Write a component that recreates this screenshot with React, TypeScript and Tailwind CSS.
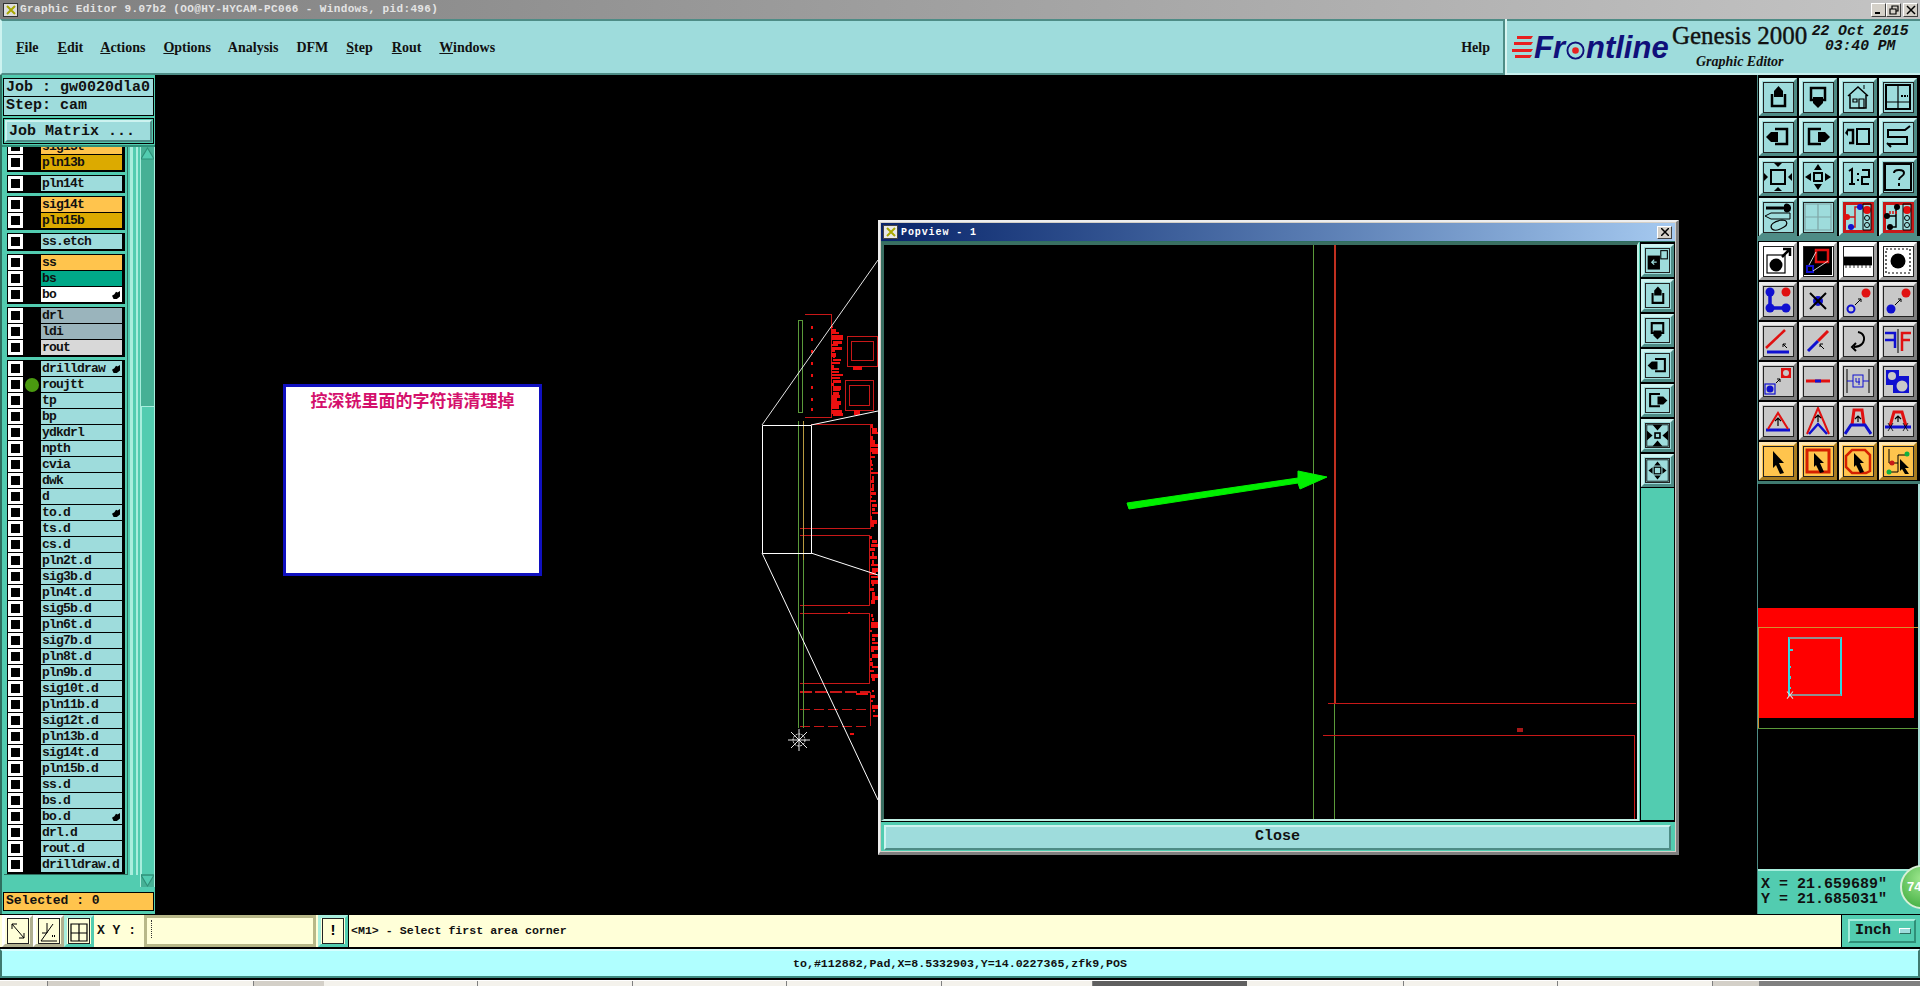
import React from "react";

const MONO = "font-['Liberation_Mono',monospace]";
const SERIF = "font-['Liberation_Serif',serif]";

type Tone = "teal" | "gray" | "white" | "amber" | "redline";

const toneClass: Record<Tone, string> = {
  teal: "bg-[#9edcdc] border-t-[#cdf3f0] border-l-[#cdf3f0] border-r-[#4e8c86] border-b-[#4e8c86]",
  gray: "bg-[#c8c8c8] border-t-[#ececec] border-l-[#ececec] border-r-[#7c7c7c] border-b-[#7c7c7c]",
  white: "bg-white border-t-white border-l-white border-r-[#a0a0a0] border-b-[#a0a0a0]",
  amber: "bg-[#ffc44d] border-t-[#ffe6b0] border-l-[#ffe6b0] border-r-[#a87c20] border-b-[#a87c20]",
  redline: "bg-[#9edcdc] border-t-[#cdf3f0] border-l-[#cdf3f0] border-r-[#4e8c86] border-b-[#4e8c86]",
};

const ToolBtn: React.FC<{ tone?: Tone; children: React.ReactNode }> = ({ tone = "teal", children }) => (
  <div className={`w-[38px] h-[38px] border-[3px] flex items-center justify-center ${toneClass[tone]}`}>
    <div
      className={`w-[31px] h-[31px] flex items-center justify-center ${
        tone === "redline" ? "border-[3px] border-[#c81818]" : "border border-[#222]"
      }`}
    >
      <svg viewBox="0 0 28 28" className="w-[28px] h-[28px] shrink-0">
        {children}
      </svg>
    </div>
  </div>
);

const PopBtn: React.FC<{ children: React.ReactNode }> = ({ children }) => (
  <div className="w-[33px] h-[33px] border-[3px] bg-[#9edcdc] border-t-[#cdf3f0] border-l-[#cdf3f0] border-r-[#4e8c86] border-b-[#4e8c86] flex items-center justify-center">
    <div className="w-[25px] h-[25px] border border-[#222] flex items-center justify-center">
      <svg viewBox="0 0 28 28" className="w-[23px] h-[23px] shrink-0">
        {children}
      </svg>
    </div>
  </div>
);

const S = { fill: "none", stroke: "#000", strokeWidth: 2 };
const BLUE = "#1010d0";
const RED = "#e01010";

const iconUp = (
  <>
    <path d="M8 11V23H21V11" {...S} strokeWidth={2.5} />
    <path d="M14.5 3L19 8V14H10V8Z" fill="#000" />
  </>
);
const iconDown = (
  <>
    <path d="M7 5H21V17H7Z" {...S} strokeWidth={2.5} />
    <path d="M14 25L9 20V14H19V20Z" fill="#000" />
  </>
);
const iconLeft = (
  <>
    <path d="M11 6H23V21H11" {...S} strokeWidth={2.5} />
    <path d="M2 14L7 9H14V19H7Z" fill="#000" />
  </>
);
const iconRight = (
  <>
    <path d="M17 6H5V21H17" {...S} strokeWidth={2.5} />
    <path d="M26 14L21 9H14V19H21Z" fill="#000" />
  </>
);
const iconFit = (
  <>
    <rect x="7" y="7" width="14" height="14" {...S} />
    <path d="M10 0H18L14 4ZM10 28H18L14 24ZM0 10V18L4 14ZM28 10V18L24 14Z" fill="#000" />
  </>
);
const iconPan = (
  <>
    <rect x="10" y="10" width="8" height="8" {...S} />
    <path d="M14 1L18 7H10ZM14 27L18 21H10ZM1 14L7 10V18ZM27 14L21 10V18Z" fill="#000" />
  </>
);

const group1 = [
  iconUp,
  iconDown,
  <>
    <path d="M4 13L14 4L24 13M6 12V25H22V12" {...S} strokeWidth={1.5} />
    <path d="M9 16H13V19H9ZM15 16H20V25H15Z" {...S} strokeWidth={1.2} />
    <path d="M20 6V2" {...S} strokeWidth={1} />
  </>,
  <>
    <rect x="2" y="2" width="24" height="24" {...S} />
    <path d="M14 2V26M2 19H26" {...S} strokeWidth={1.2} />
    <path d="M17 13H24" stroke="#000" strokeWidth={2} strokeDasharray="2 1" />
  </>,
  iconLeft,
  iconRight,
  <>
    <rect x="13" y="6" width="12" height="15" {...S} />
    <path d="M4 7H9V20H5" {...S} strokeWidth={2.5} />
    <path d="M1 10L4 5V13Z" fill="#000" />
  </>,
  <path d="M26 3L21 7H4V14H23V21H4M3 20L7 24" {...S} />,
  iconFit,
  iconPan,
  <>
    <path d="M5 8L8 6V21M8 21H5M8 21H11M13 11H15M13 17H15" {...S} />
    <path d="M18 7H25V14H18V21H25" {...S} />
  </>,
  <>
    <rect x="1" y="1" width="26" height="26" {...S} />
    <path d="M10 10C10 6 20 6 20 10C20 14 15 13 15 17" {...S} />
    <rect x="14" y="20" width="2" height="3" fill="#000" />
  </>,
  <>
    <path d="M2 5H22" stroke="#000" strokeWidth={3} />
    <path d="M20 2A4 4 0 0 1 27 5A4 4 0 0 1 20 8Z" fill="#000" />
    <path d="M1 13L7 10H26V16H7Z" {...S} strokeWidth={1} />
    <path d="M8 26C5 22 10 18 18 17C24 17 24 22 20 24C15 27 10 28 8 26Z" {...S} strokeWidth={1.2} />
  </>,
  <path d="M1 1H27V27H1ZM14 1V27M1 14H27" fill="none" stroke="#7fa5a5" strokeWidth={1.2} />,
  <>
    <path d="M3 14H11V4H16M11 14V24H7" fill="none" stroke="#c81818" strokeWidth={1.5} />
    <circle cx="3" cy="14" r="3" fill={RED} />
    <circle cx="16" cy="4" r="3" fill={BLUE} />
    <circle cx="7" cy="24" r="3" fill={BLUE} />
    <circle cx="23" cy="7" r="4" fill={RED} />
    <circle cx="23" cy="15" r="2.5" {...S} strokeWidth={1} />
    <circle cx="23" cy="22" r="2.5" {...S} strokeWidth={1} />
    <path d="M19 1H27V27H19Z" {...S} strokeWidth={1} />
  </>,
  <>
    <path d="M3 13H12V4M12 13V24H6" fill="none" stroke="#000" strokeWidth={1.5} />
    <path d="M6 11V8M9 11V8M12 11V8" stroke={RED} strokeWidth={1.5} />
    <circle cx="3" cy="13" r="3" fill="#000" />
    <circle cx="13" cy="4" r="3" fill="#000" />
    <circle cx="6" cy="24" r="3" fill="#000" />
    <circle cx="23" cy="7" r="4" fill={RED} />
    <circle cx="23" cy="15" r="2.5" {...S} strokeWidth={1} />
    <circle cx="23" cy="22" r="2.5" {...S} strokeWidth={1} />
    <path d="M19 1H27V27H19Z" {...S} strokeWidth={1} />
  </>,
];

const group2: { tone: Tone; icon: React.ReactNode }[] = [
  {
    tone: "white",
    icon: (
      <>
        <rect x="3" y="8" width="18" height="18" {...S} strokeWidth={1.2} />
        <circle cx="12" cy="18" r="6.5" fill="#000" />
        <path d="M18 10L25 3M19 2H26V9" {...S} strokeWidth={2.5} />
      </>
    ),
  },
  {
    tone: "white",
    icon: (
      <>
        <rect x="0" y="0" width="28" height="28" fill="#000" />
        <rect x="12" y="3" width="12" height="12" fill="none" stroke={RED} strokeWidth={2.5} />
        <rect x="3" y="19" width="6" height="6" fill="none" stroke={BLUE} strokeWidth={2} />
        <path d="M5 18L12 5M9 24L24 14" stroke="#fff" strokeWidth={0.8} />
      </>
    ),
  },
  {
    tone: "white",
    icon: <path d="M0 10H28V18H0ZM2 18V21M6 18V21M10 18V21M14 18V21M18 18V21M22 18V21M26 18V21" fill="#000" stroke="#000" strokeWidth={0.8} />,
  },
  {
    tone: "white",
    icon: (
      <>
        <rect x="2" y="2" width="24" height="24" fill="none" stroke="#000" strokeWidth={1.2} strokeDasharray="2 2" />
        <circle cx="14" cy="14" r="7.5" fill="#000" />
      </>
    ),
  },
  {
    tone: "gray",
    icon: (
      <>
        <path d="M6 5V21H22" fill="none" stroke={BLUE} strokeWidth={3.5} />
        <circle cx="6" cy="5" r="4.5" fill={BLUE} />
        <circle cx="6" cy="21" r="4.5" fill={BLUE} />
        <circle cx="22" cy="21" r="4.5" fill={BLUE} />
        <circle cx="22" cy="5" r="4.5" fill={RED} />
      </>
    ),
  },
  {
    tone: "gray",
    icon: (
      <>
        <circle cx="14" cy="14" r="5" fill={BLUE} />
        <path d="M6 6L22 22M22 6L6 22" stroke="#000" strokeWidth={2} />
      </>
    ),
  },
  {
    tone: "gray",
    icon: (
      <>
        <circle cx="7" cy="22" r="3.5" fill="none" stroke={BLUE} strokeWidth={2} />
        <circle cx="22" cy="6" r="4.5" fill={RED} />
        <path d="M11 18L17 12M14 12H17V15" {...S} strokeWidth={1} />
      </>
    ),
  },
  {
    tone: "gray",
    icon: (
      <>
        <circle cx="7" cy="22" r="4.5" fill={BLUE} />
        <circle cx="22" cy="6" r="4.5" fill={RED} />
        <path d="M11 18L17 12M14 12H17V15" {...S} strokeWidth={1} />
      </>
    ),
  },
  {
    tone: "gray",
    icon: (
      <>
        <path d="M2 21L21 3" stroke={RED} strokeWidth={2.5} />
        <path d="M3 25H25" stroke={BLUE} strokeWidth={3} />
        <path d="M19 17L23 21M19 17V20M19 17H22" {...S} strokeWidth={1} />
      </>
    ),
  },
  {
    tone: "gray",
    icon: (
      <>
        <path d="M14 14L24 4" stroke={RED} strokeWidth={3} />
        <path d="M4 24L14 14" stroke={BLUE} strokeWidth={3} />
        <path d="M20 22L16 18M19 17H16V20" {...S} strokeWidth={1} />
      </>
    ),
  },
  {
    tone: "gray",
    icon: <path d="M14 5C20 6 22 12 18 17C16 19 13 20 10 20M12 16L8 20L12 24" {...S} />,
  },
  {
    tone: "gray",
    icon: (
      <>
        <path d="M1 6H11V21M1 13H10" fill="none" stroke={BLUE} strokeWidth={2.5} />
        <path d="M14 2V26" stroke="#000" strokeWidth={1} />
        <path d="M18 24V6H27M18 13H26" fill="none" stroke={RED} strokeWidth={2.5} />
      </>
    ),
  },
  {
    tone: "gray",
    icon: (
      <>
        <rect x="1" y="17" width="10" height="10" fill="none" stroke={BLUE} strokeWidth={1.2} />
        <circle cx="6" cy="22" r="3.5" fill={BLUE} />
        <rect x="17" y="1" width="10" height="10" fill={RED} />
        <circle cx="22" cy="6" r="3" fill="#c8c8c8" />
        <path d="M12 16L16 12M13 12H16V15" {...S} strokeWidth={1} />
      </>
    ),
  },
  {
    tone: "gray",
    icon: (
      <>
        <path d="M2 14H26" stroke={RED} strokeWidth={3} />
        <path d="M11 14H17" stroke={BLUE} strokeWidth={3} />
      </>
    ),
  },
  {
    tone: "gray",
    icon: (
      <>
        <path d="M3 2V26M25 2V26" stroke="#000" strokeWidth={1} />
        <rect x="9" y="8" width="10" height="12" fill="none" stroke={BLUE} strokeWidth={1} />
        <path d="M12 11V15H16M15 11V18M3 14H9M19 14H25" fill="none" stroke={BLUE} strokeWidth={1} />
      </>
    ),
  },
  {
    tone: "gray",
    icon: (
      <>
        <path d="M2 3H15V9H25V26H9V18H2Z" fill={BLUE} />
        <circle cx="8" cy="9" r="4" fill="#c8c8c8" />
        <circle cx="18" cy="19" r="5.5" fill="#c8c8c8" />
      </>
    ),
  },
  {
    tone: "gray",
    icon: (
      <>
        <path d="M2 23H26" stroke={BLUE} strokeWidth={3} />
        <path d="M14 11V19M11 14L14 11L17 14" {...S} strokeWidth={1.2} />
        <path d="M4 22L14 6L24 22" fill="none" stroke={RED} strokeWidth={2} />
      </>
    ),
  },
  {
    tone: "gray",
    icon: (
      <>
        <path d="M3 27L14 1L25 27" fill="none" stroke={RED} strokeWidth={2} />
        <path d="M5 27L14 17L23 27" fill="none" stroke={BLUE} strokeWidth={2.5} />
        <path d="M14 8V15M11 11L14 8L17 11" {...S} strokeWidth={1.2} />
      </>
    ),
  },
  {
    tone: "gray",
    icon: (
      <>
        <path d="M8 18L10 3H18L20 18" fill="none" stroke={RED} strokeWidth={3} />
        <path d="M1 27L7 18H21L27 27" fill="none" stroke={BLUE} strokeWidth={3} />
        <path d="M14 9V15M11 12L14 9L17 12" {...S} strokeWidth={1.2} />
      </>
    ),
  },
  {
    tone: "gray",
    icon: (
      <>
        <path d="M6 19L10 5H18L22 19" fill="none" stroke={RED} strokeWidth={3} />
        <path d="M1 20H27" stroke={BLUE} strokeWidth={3} />
        <path d="M4 16L9 24M9 16L4 24M19 16L24 24M24 16L19 24" stroke="#000" strokeWidth={0.8} />
        <path d="M14 9V15M11 12L14 9L17 12" {...S} strokeWidth={1.2} />
      </>
    ),
  },
  {
    tone: "amber",
    icon: <path d="M9 4L20 16L15 16L20 26L16 27L12 18L9 21Z" fill="#000" />,
  },
  {
    tone: "amber",
    icon: (
      <>
        <rect x="3" y="3" width="22" height="22" fill="none" stroke="#d42000" strokeWidth={3} />
        <path d="M10 6L20 16L16 16L20 25L16 26L12 18L10 20Z" fill="#000" />
      </>
    ),
  },
  {
    tone: "amber",
    icon: (
      <>
        <path d="M8 3H21L26 8V24L22 26H8L2 20V9Z" fill="none" stroke="#d42000" strokeWidth={2.5} />
        <path d="M10 6L20 16L16 16L20 25L16 26L12 18L10 20Z" fill="#000" />
      </>
    ),
  },
  {
    tone: "amber",
    icon: (
      <>
        <path d="M5 2V16H9M9 16H14V8H23M5 25H14V16" fill="none" stroke="#000" strokeWidth={1} />
        <circle cx="8" cy="16" r="2.5" fill="#c81818" />
        <circle cx="23" cy="7" r="2.5" fill="#10b040" />
        <circle cx="5" cy="25" r="2.5" fill="#10b040" />
        <path d="M16 12L25 21L21 21L25 27L21 27L18 22L16 24Z" fill="#000" />
      </>
    ),
  },
];

const popIcons = [
  <>
    <rect x="2" y="8" width="15" height="17" fill="#000" />
    <path d="M13 16H7M10 13L7 16L10 19" stroke="#9edcdc" strokeWidth={1.5} fill="none" />
    <rect x="18" y="2" width="8" height="10" {...S} strokeWidth={1.3} />
  </>,
  iconUp,
  iconDown,
  iconLeft,
  iconRight,
  <>
    <rect x="1" y="1" width="26" height="26" {...S} strokeWidth={1} />
    <rect x="11" y="11" width="6" height="6" {...S} />
    <path d="M8 1H20L14 8ZM8 27H20L14 20ZM1 8V20L8 14ZM27 8V20L20 14Z" fill="#000" />
  </>,
  <>
    <rect x="1" y="1" width="26" height="26" {...S} strokeWidth={1} />
    <rect x="10" y="10" width="8" height="8" {...S} strokeWidth={1.5} />
    <path d="M14 3L18 8H10ZM14 25L18 20H10ZM3 14L8 10V18ZM25 14L20 10V18Z" fill="#000" />
  </>,
];

type Layer = { name: string; color?: string; hand?: boolean; dot?: boolean };

const layerGroups: Layer[][] = [
  [
    { name: "sig13t", color: "bg-[#ffc44d]" },
    { name: "pln13b", color: "bg-[#dcaa00]" },
  ],
  [{ name: "pln14t" }],
  [
    { name: "sig14t", color: "bg-[#ffc44d]" },
    { name: "pln15b", color: "bg-[#dcaa00]" },
  ],
  [{ name: "ss.etch" }],
  [
    { name: "ss", color: "bg-[#ffc44d]" },
    { name: "bs", color: "bg-[#00a888]" },
    { name: "bo", color: "bg-white", hand: true },
  ],
  [
    { name: "drl", color: "bg-[#9ab4bc]" },
    { name: "ldi", color: "bg-[#9ab4bc]" },
    { name: "rout", color: "bg-[#d8d8d8]" },
  ],
  [
    { name: "drilldraw", hand: true },
    { name: "roujtt", dot: true },
    { name: "tp" },
    { name: "bp" },
    { name: "ydkdrl" },
    { name: "npth" },
    { name: "cvia" },
    { name: "dwk" },
    { name: "d" },
    { name: "to.d", hand: true },
    { name: "ts.d" },
    { name: "cs.d" },
    { name: "pln2t.d" },
    { name: "sig3b.d" },
    { name: "pln4t.d" },
    { name: "sig5b.d" },
    { name: "pln6t.d" },
    { name: "sig7b.d" },
    { name: "pln8t.d" },
    { name: "pln9b.d" },
    { name: "sig10t.d" },
    { name: "pln11b.d" },
    { name: "sig12t.d" },
    { name: "pln13b.d" },
    { name: "sig14t.d" },
    { name: "pln15b.d" },
    { name: "ss.d" },
    { name: "bs.d" },
    { name: "bo.d", hand: true },
    { name: "drl.d" },
    { name: "rout.d" },
    { name: "drilldraw.d" },
  ],
];

const LayerRow: React.FC<{ layer: Layer }> = ({ layer }) => (
  <div className="h-[16px] flex items-start relative">
    <div className="w-[15px] h-[15px] ml-[1px] border-[3px] border-white bg-black" />
    {layer.dot && <div className="absolute left-[18px] top-[1px] w-[14px] h-[14px] rounded-full bg-[#4a9a10]" />}
    <div
      className={`ml-[18px] w-[81px] h-[15px] flex items-center justify-between pl-[1px] pr-[2px] text-[13px] tracking-[-0.8px] font-bold text-[#111] leading-none ${MONO} ${
        layer.color ?? "bg-[#9edcdc]"
      }`}
    >
      <span>{layer.name}</span>
      {layer.hand && (
        <svg viewBox="0 0 10 10" className="w-[8px] h-[8px]">
          <path d="M0 6L3 4L5 1L7 2L10 0V7L6 10H2Z" fill="#000" />
        </svg>
      )}
    </div>
  </div>
);

const LeftPanel = () => (
  <div className="w-[155px] shrink-0 bg-[#52ccb0] flex flex-col border-l-[2px] border-[#2f6f60]">
    <div className="h-[72px] shrink-0 flex flex-col px-[1px] pt-[3px] border-b-2 border-[#2f8f78]">
      <div className={`h-[19px] bg-[#9edcdc] border border-black pl-[2px] font-bold text-[15px] leading-[17px] whitespace-nowrap text-[#111] ${MONO}`}>
        Job : gw0020dla0
      </div>
      <div className={`h-[19px] bg-[#9edcdc] border border-black border-t-0 pl-[2px] font-bold text-[15px] leading-[17px] text-[#111] ${MONO}`}>
        Step: cam
      </div>
      <div className="mt-[2px] h-[26px] border border-black bg-[#52ccb0] p-[1px]">
        <div className={`h-[22px] bg-[#9edcdc] border-2 border-t-[#cdf3f0] border-l-[#cdf3f0] border-r-[#4e8c86] border-b-[#4e8c86] pl-[2px] pt-[1px] font-bold text-[15px] leading-[17px] text-[#111] ${MONO}`}>
          Job Matrix ...
        </div>
      </div>
    </div>
    <div className="flex-1 flex min-h-0">
      <div className="w-[124px] h-[728px] overflow-hidden border-r border-b border-[#2f6f60] ml-[2px] pl-[3px]">
        <div className="-mt-[9px] flex flex-col gap-[3px]">
          {layerGroups.map((group) => (
            <div key={group[0].name} className="w-[118px] bg-black py-[1px]">
              {group.map((layer) => (
                <LayerRow key={layer.name} layer={layer} />
              ))}
            </div>
          ))}
        </div>
      </div>
      <div className="w-[8px] h-[728px] border-l-[3px] border-r-2 border-[#a8eedd] ml-[2px]" />
      <div className="w-[15px] h-[740px] ml-[2px] bg-[#46b095] border-x border-[#a8eedd] flex flex-col">
        <svg viewBox="0 0 12 12" className="w-[13px] h-[13px]">
          <path d="M6 1L12 11H0Z" fill="#52ccb0" stroke="#2f8f78" />
        </svg>
        <div className="mt-[246px] flex-1 bg-[#52ccb0] border-t border-l border-[#a8eedd]" />
        <svg viewBox="0 0 12 12" className="w-[13px] h-[13px]">
          <path d="M6 11L12 1H0Z" fill="#52ccb0" stroke="#2f8f78" />
        </svg>
      </div>
    </div>
    <div className={`mx-[1px] mb-[3px] h-[19px] bg-[#ffc44d] border border-black pl-[2px] text-[13px] leading-[16px] font-bold text-[#111] ${MONO}`}>
      Selected : 0
    </div>
  </div>
);

// scattered pads of the board, fixed seed so the picture does not change
const seeded = (seed: number) => () => {
  seed = (seed * 16807) % 2147483647;
  return seed / 2147483647;
};

const makeBlobs = (x0: number, x1: number, y0: number, y1: number, step: number, seed: number) => {
  const rnd = seeded(seed);
  const out: { x: number; y: number; w: number; h: number }[] = [];
  for (let y = y0; y < y1; y += step) {
    const w = 2 + Math.floor(rnd() * (x1 - x0 - 1));
    out.push({ x: x0 + Math.floor(rnd() * 3), y, w, h: 2 + Math.floor(rnd() * 3) });
  }
  return out;
};

const blobs = [
  ...makeBlobs(831, 842, 326, 414, 3, 77),
  ...makeBlobs(870, 878, 424, 526, 4, 991),
  ...makeBlobs(870, 878, 536, 604, 4, 313),
  ...makeBlobs(870, 878, 614, 682, 4, 5501),
  ...makeBlobs(871, 878, 690, 718, 5, 171),
];

const dashed = [692, 709, 726];

// canvas is offset by x=155, y=75
const PcbDrawing = () => (
  <svg className="absolute left-0 top-0 w-[1602px] h-[838px]" viewBox="155 75 1602 838" shapeRendering="crispEdges">
    <g fill="none" stroke="#c81818">
      <path d="M805 314H831V417H805" />
      <path d="M847 336H877V366H847ZM851 341H873V360H851Z" />
      <path d="M845 380H873V410H845ZM849 385H869V405H849Z" />
      <path d="M811 424H870V528H800" />
      <path d="M800 535H869V605H800" />
      <path d="M800 613H869V683H800" />
      <path d="M870 692V726" />
      {dashed.map((y, i) => (
        <path key={y} d={`M800 ${y}H870`} strokeWidth={i === 0 ? 2 : 1} strokeDasharray={i === 0 ? "12 3" : "10 4"} />
      ))}
    </g>
    <g fill="#ee1010">
      {[326, 338, 350, 362, 374, 386, 398, 408].map((y) => (
        <rect key={y} x={811} y={y} width={2} height={3} />
      ))}
      {blobs.map((b, i) => (
        <rect key={i} x={b.x} y={b.y} width={b.w} height={b.h} />
      ))}
      <rect x={853} y={366} width={9} height={4} />
      <rect x={854} y={410} width={6} height={5} />
      <rect x={856} y={693} width={12} height={2} />
      <rect x={850} y={733} width={4} height={2} />
      <rect x={848} y={612} width={2} height={2} />
    </g>
    <path d="M798.5 320.5H802.5V412.5H798.5Z" fill="none" stroke="#5a9a3a" />
    <path d="M798.5 421V728" stroke="#5a9a3a" fill="none" />
    <path d="M803.5 421V560" stroke="#b89a40" fill="none" />
    <path d="M803.5 560V728" stroke="#5a9a3a" fill="none" />
    <g fill="none" stroke="#fff" shapeRendering="auto">
      <path d="M762.5 425.5H811.5V553.5H762.5Z" />
      <path d="M762 425L878 260" strokeWidth={0.9} />
      <path d="M811 425L878 411" />
      <path d="M811 553L878 575" />
      <path d="M762 553L878 800" />
      <path d="M799 729V751M788 740H810M791 732L807 748M807 732L791 748" strokeWidth={0.9} />
      <circle cx="799" cy="740" r="6" strokeDasharray="2 1" strokeWidth={0.9} />
    </g>
  </svg>
);

const Popview = () => (
  <div className="absolute left-[723px] top-[145px] w-[801px] h-[635px] bg-[#d4d0c8] border-t-2 border-l-2 border-[#eee] border-r-[3px] border-b-[3px] border-r-[#808080] border-b-[#808080] flex flex-col p-[1px]">
    <div className="h-[18px] shrink-0 bg-gradient-to-r from-[#0a246a] to-[#a6caf0] flex items-center pl-[2px] pr-[3px]">
      <div className="w-[15px] h-[14px] bg-[#e8e8e8] border border-[#444] flex items-center justify-center">
        <svg viewBox="0 0 10 10" className="w-[10px] h-[10px]">
          <path d="M1 1L9 9M9 1L1 9" stroke="#a8a800" strokeWidth={2} />
        </svg>
      </div>
      <span className={`ml-[3px] text-[10px] tracking-[0.9px] font-bold text-white ${MONO}`}>Popview - 1</span>
      <div className="ml-auto w-[15px] h-[13px] bg-[#d4d0c8] border border-t-white border-l-white border-r-[#404040] border-b-[#404040] flex items-center justify-center">
        <svg viewBox="0 0 8 8" className="w-[8px] h-[8px]">
          <path d="M0 0L8 8M8 0L0 8" stroke="#000" strokeWidth={1.5} />
        </svg>
      </div>
    </div>
    <div className="flex-1 min-h-0 bg-[#52ccb0] flex flex-col border-t border-[#2f6f60]">
      <div className="flex-1 min-h-0 flex">
        <div className="w-[758px] bg-black border-l-[3px] border-t-[3px] border-[#3a6f62] border-r-2 border-r-[#c0f0e4] border-b-2 border-b-[#c0f0e4] relative">
          <svg className="absolute inset-0 w-full h-full" shapeRendering="crispEdges">
            <path d="M429.5 0V574" stroke="#5a9a3a" fill="none" />
            <path d="M450.5 0V459" stroke="#c03020" strokeWidth={2} fill="none" />
            <path d="M450.5 459V574" stroke="#5a9a3a" fill="none" />
            <path d="M444 458.5H752" stroke="#c81818" fill="none" />
            <path d="M439 490.5H750.5V574" stroke="#c81818" fill="none" />
            <rect x={633} y={483} width={6} height={4} fill="#a81818" />
            <path
              d="M243 258L414 233L414 226L443 232L416 244L414 238L245 264Z"
              fill="#00f000"
              stroke="#00f000"
              strokeLinejoin="round"
              shapeRendering="auto"
            />
          </svg>
        </div>
        <div className="flex-1 border border-black ml-[1px] flex flex-col items-center bg-[#52ccb0]">
          <div className="w-full bg-black flex flex-col items-center gap-[2px] py-[1px]">
            {popIcons.map((icon, i) => (
              <PopBtn key={i}>{icon}</PopBtn>
            ))}
          </div>
        </div>
      </div>
      <div className="h-[30px] shrink-0 border-t-[1px] border-black pt-[3px] pl-[3px] pr-[4px] pb-[1px]">
        <div className={`h-full bg-[#9edcdc] border-2 border-t-[#cdf3f0] border-l-[#cdf3f0] border-r-[#4e8c86] border-b-[#4e8c86] flex items-center justify-center text-[15px] font-bold text-[#111] ${MONO}`}>
          Close
        </div>
      </div>
    </div>
  </div>
);

const RightPanel = () => (
  <div className="w-[163px] shrink-0 bg-black flex flex-col border-l border-[#4e8c86]">
    <div className="pt-[3px] pl-[1px] flex flex-col">
      <div className="grid grid-cols-4 gap-[2px] w-[158px]">
        {group1.map((icon, i) => (
          <ToolBtn key={i} tone={i > 13 ? "redline" : "teal"}>
            {icon}
          </ToolBtn>
        ))}
      </div>
      <div className="h-[5px] mb-[1px] -ml-[1px] w-[162px] bg-[#4e8c86]" />
      <div className="grid grid-cols-4 gap-[2px] w-[158px]">
        {group2.map((b, i) => (
          <ToolBtn key={i} tone={b.tone}>
            {b.icon}
          </ToolBtn>
        ))}
      </div>
    </div>
    <div className="h-[3px] mt-[1px] bg-[#3f7a70]" />
    <div className="flex-1 relative border-r-2 border-[#a8dcd4]">
      <svg className="absolute inset-0 w-full h-full" viewBox="1758 484 160 384" preserveAspectRatio="none" shapeRendering="crispEdges">
        <rect x={1758} y={608} width={156} height={109} fill="#ff0000" />
        <path d="M1758 627.5H1918" stroke="#d09030" fill="none" />
        <path d="M1758 727.5H1918" stroke="#5a9a3a" fill="none" />
        <path d="M1758.5 627V727" stroke="#d09030" fill="none" />
        <path d="M1789 638H1841V694H1789Z" fill="none" stroke="#30d8e0" strokeWidth={2} />
        <path d="M1789 638H1841M1789 694H1841" fill="none" stroke="#909090" strokeWidth={2} />
        <path d="M1788 650H1793M1788 667H1791M1788 677H1791M1788 687H1791" stroke="#30d8e0" strokeWidth={2} />
        <path d="M1787 691L1793 698M1793 691L1787 698" stroke="#e0e0e0" shapeRendering="auto" />
      </svg>
    </div>
    <div className="h-[45px] shrink-0 bg-[#52ccb0] border-t-2 border-[#a8eedd] relative pl-[3px] pt-[6px]">
      <div className={`text-[15px] leading-[15px] font-bold text-[#111] ${MONO}`}>X = 21.659689"</div>
      <div className={`text-[15px] leading-[15px] font-bold text-[#111] ${MONO}`}>Y = 21.685031"</div>
      <div className="absolute left-[142px] top-[-6px] w-[44px] h-[44px] rounded-full border-2 border-[#d8f0d8] bg-[radial-gradient(circle_at_50%_30%,#a0e890,#38a838)] flex items-center pl-[5px] text-[13px] font-bold text-white font-['Liberation_Sans',sans-serif]">
        74
      </div>
    </div>
  </div>
);

const BarBtn: React.FC<{ teal?: boolean; width: string; children: React.ReactNode }> = ({ teal, width, children }) => (
  <div
    className={`${width} h-full shrink-0 border-[3px] flex items-center justify-center ${
      teal
        ? "bg-[#ffffd8] border-[#52ccb0] border-t-[#a8eedd] border-l-[#a8eedd]"
        : "bg-[#ffffd8] border-t-white border-l-white border-r-[#b0b090] border-b-[#b0b090]"
    }`}
  >
    <div className="w-[22px] h-[26px] border border-[#222] flex items-center justify-center">{children}</div>
  </div>
);

const BottomBar = () => (
  <div className="h-[35px] shrink-0 bg-black flex items-stretch pt-[1px] pb-[2px]">
    <div className="flex w-[1841px] bg-[#ffffd8]">
      <div className="w-[2px]" />
      <BarBtn width="w-[31px]">
        <svg viewBox="0 0 20 24" className="w-[20px] h-[24px]">
          <path d="M4 5L16 19M4 5V10M4 5H9M16 19V14M16 19H11" fill="none" stroke="#000" strokeWidth={1} />
        </svg>
      </BarBtn>
      <BarBtn width="w-[31px]">
        <svg viewBox="0 0 20 24" className="w-[20px] h-[24px]">
          <path d="M2 22L14 5M2 22H18M8 4V14M8 14H3" fill="none" stroke="#000" strokeWidth={1} />
          <path d="M13 17H17" stroke="#000" strokeWidth={2} strokeDasharray="1 1" />
        </svg>
      </BarBtn>
      <BarBtn teal width="w-[30px]">
        <svg viewBox="0 0 20 24" className="w-[20px] h-[24px]">
          <path d="M2 5H18V22H2ZM10 5V22M2 14H18" fill="none" stroke="#000" strokeWidth={1.2} />
        </svg>
      </BarBtn>
      <div className={`w-[50px] pl-[3px] flex items-center text-[13px] font-bold text-[#111] ${MONO}`}>X Y :</div>
      <div className="w-[172px] border-[3px] border-[#b8b888] bg-[#ffffd8] relative">
        <div className="absolute left-[4px] top-[2px] h-[18px] w-[1px] border-l border-dotted border-[#333]" />
      </div>
      <div className="w-[2px]" />
      <BarBtn teal width="w-[30px]">
        <span className={`text-[15px] font-bold leading-none ${MONO}`}>!</span>
      </BarBtn>
      <div className={`flex-1 flex items-center pl-[2px] text-[11.6px] font-bold text-[#111] border-l border-black ${MONO}`}>
        &lt;M1&gt; - Select first area corner
      </div>
    </div>
    <div className="flex-1 bg-[#52ccb0] ml-[1px] p-[4px] pl-[6px]">
      <div className={`h-full border-2 border-t-[#a8eedd] border-l-[#a8eedd] border-r-[#2f8f78] border-b-[#2f8f78] flex items-center pl-[5px] gap-[8px] text-[15px] font-bold text-[#111] ${MONO}`}>
        Inch
        <div className="w-[12px] h-[6px] bg-[#9edcdc] border border-b-[#2f6f60] border-r-[#2f6f60] border-t-white border-l-white" />
      </div>
    </div>
  </div>
);

const Taskbar = () => (
  <div className="h-[6px] shrink-0 bg-[#d4d0c8] flex items-stretch border-t border-white overflow-hidden">
    <div className="w-[48px] bg-[#ece9e2] border-r border-[#808080]" />
    <div className="ml-[52px] w-[154px] bg-[#f4f2ec] border-r border-[#808080]" />
    <div className="ml-[70px] w-[154px] bg-[#f4f2ec] border-r border-[#808080]" />
    <div className="w-[155px] bg-[#f4f2ec] border-r border-[#808080]" />
    <div className="w-[154px] bg-[#f4f2ec] border-r border-[#808080]" />
    <div className="w-[155px] bg-[#f4f2ec] border-r border-[#808080]" />
    <div className="w-[151px] bg-[#f4f2ec] border-r border-[#808080]" />
    <div className="w-[154px] bg-[#606060]" />
    <div className="w-[157px] bg-[#f4f2ec] border-r border-[#808080]" />
    <div className="w-[154px] bg-[#f4f2ec] border-r border-[#808080]" />
    <div className="w-[155px] bg-[#f4f2ec] border-r border-[#808080]" />
    <div className="ml-[46px] flex-1 bg-[#808080]" />
  </div>
);

export default function App() {
  return (
    <div className="w-[1920px] h-[986px] flex flex-col overflow-hidden bg-black">
      {/* window title */}
      <div className="h-[19px] shrink-0 bg-gradient-to-r from-[#7f7f7f] to-[#c4c4c4] flex items-center pl-[3px] pr-[2px]">
        <div className="w-[15px] h-[14px] bg-[#ddd] border border-[#333] flex items-center justify-center">
          <svg viewBox="0 0 10 10" className="w-[10px] h-[10px]">
            <path d="M1 1L9 9M9 1L1 9" stroke="#a8a800" strokeWidth={2} />
          </svg>
        </div>
        <span className={`ml-[2px] text-[11px] tracking-[0.37px] font-bold text-[#e4e4e4] whitespace-pre ${MONO}`}>
          Graphic Editor 9.07b2 (OO@HY-HYCAM-PC066 - Windows, pid:496)
        </span>
        <div className="ml-auto flex items-center">
          {[
            <path key="a" d="M1 8H6" stroke="#000" strokeWidth={2} />,
            <path key="b" d="M1 4H7V9H1ZM3 4V1H9V6H7" fill="none" stroke="#000" strokeWidth={1.2} />,
            <path key="c" d="M1 1L9 9M9 1L1 9" stroke="#000" strokeWidth={1.5} />,
          ].map((glyph, i) => (
            <div
              key={glyph.key}
              className={`w-[15px] h-[14px] bg-[#d4d0c8] border border-t-white border-l-white border-r-[#404040] border-b-[#404040] flex items-center justify-center ${
                i === 2 ? "ml-[2px]" : ""
              }`}
            >
              <svg viewBox="0 0 10 10" className="w-[10px] h-[10px]">
                {glyph}
              </svg>
            </div>
          ))}
        </div>
      </div>

      {/* menu + logo */}
      <div className="h-[56px] shrink-0 flex bg-[#d8f4f0]">
        <div className="w-[1505px] bg-[#9edcdc] border-[2px] border-t-[#4e8c86] border-l-[#cdf3f0] border-r-[#4e8c86] border-b-[#4e8c86] flex items-center justify-between pl-[14px] pr-[13px]">
          <div className={`flex gap-[17px] text-[14px] font-bold text-[#111] ${SERIF}`}>
            <span><u>F</u>ile</span>
            <span className="ml-[2px]"><u>E</u>dit</span>
            <span><u>A</u>ctions</span>
            <span className="ml-[1px]"><u>O</u>ptions</span>
            <span>Analysis</span>
            <span className="ml-[1px]">DFM</span>
            <span className="ml-[1px]"><u>S</u>tep</span>
            <span className="ml-[2px]"><u>R</u>out</span>
            <span className="ml-[1px]"><u>W</u>indows</span>
          </div>
          <span className={`text-[14px] font-bold text-[#111] ${SERIF}`}>Help</span>
        </div>
        <div className="w-[413px] ml-[2px] bg-[#9edcdc] border-t-2 border-[#4e8c86] border-b-[2px] border-b-[#c8f0ee] flex items-start pl-[4px]">
          <svg viewBox="0 0 22 24" className="w-[22px] h-[24px] mt-[14px] shrink-0">
            <path d="M6 1H22L20 4H6ZM3 7H22L20 10H3ZM1 14H22L20 17H1ZM4 20H21L19 23H4Z" fill="#e82020" />
          </svg>
          <div className="ml-[1px] mt-[10px] flex items-center text-[31px] leading-[34px] font-bold italic text-[#10107a] font-['Liberation_Sans',sans-serif]">
            <span>Fr</span>
            <svg viewBox="0 0 20 20" className="w-[19px] h-[19px] mt-[5px] mx-[1px] shrink-0">
              <circle cx="10" cy="10" r="8.5" fill="none" stroke="#10107a" strokeWidth={2} />
              <circle cx="10" cy="10" r="3.5" fill="#e82020" />
            </svg>
            <span>ntline</span>
          </div>
          <div className={`ml-[4px] flex flex-col items-center w-[134px] text-[#111] ${SERIF}`}>
            <span className="text-[25px] leading-[28px] mt-[1px] font-normal whitespace-nowrap [-webkit-text-stroke:0.4px_#111]">Genesis 2000</span>
            <span className="text-[14px] leading-[16px] mt-[4px] font-bold italic whitespace-nowrap">Graphic Editor</span>
          </div>
          <div className={`ml-[5px] mt-[3px] flex flex-col items-center text-[14.7px] leading-[15px] italic font-bold text-[#111] whitespace-nowrap ${MONO}`}>
            <span>22 Oct 2015</span>
            <span>03:40 PM</span>
          </div>
        </div>
      </div>

      {/* work area */}
      <div className="flex-1 flex min-h-0">
        <LeftPanel />
        <div className="flex-1 relative bg-black">
          <PcbDrawing />
          <div className="absolute left-[128px] top-[309px] w-[259px] h-[192px] bg-white border-[3px] border-[#1010c0] flex justify-center pt-[0px] text-[17px] font-bold text-[#d4106c] font-['Noto_Sans_CJK_SC',sans-serif]">
            控深铣里面的字符请清理掉
          </div>
          <Popview />
        </div>
        <RightPanel />
      </div>

      <BottomBar />

      {/* status line */}
      <div className="h-[31px] shrink-0 bg-black pb-[2px]">
        <div className={`h-full bg-[#b0ffff] border-[2px] border-t-[#d8ffff] border-l-[#3f7a70] border-r-[#3f7a70] border-b-[#3f8a80] flex items-center justify-center text-[11.6px] font-bold text-[#111] ${MONO}`}>
          to,#112882,Pad,X=8.5332903,Y=14.0227365,zfk9,POS
        </div>
      </div>

      <Taskbar />
    </div>
  );
}
